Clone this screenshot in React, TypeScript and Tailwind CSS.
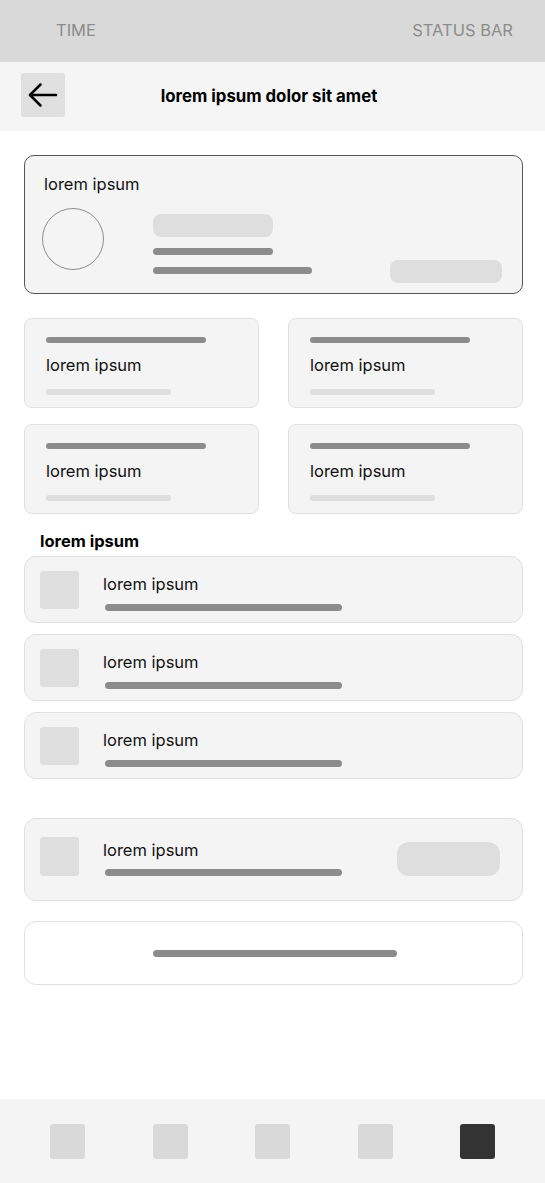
const stats = [0, 1, 2, 3];
const rows = [0, 1, 2];
const navItems = [false, false, false, false, true];

function BackArrow() {
  return (
    <svg width="30" height="26" viewBox="0 0 30 26" fill="none" stroke="#000" strokeWidth={2.5} strokeLinecap="round" strokeLinejoin="round">
      <path d="M28 13H2" />
      <path d="M12.5 2.5 2 13l10.5 10.5" />
    </svg>
  );
}

export default function App() {
  return (
    <div className="flex h-[1183px] w-[545px] flex-col bg-white font-['Inter',sans-serif] text-[16.5px] text-[#111]">
      {/* Status bar */}
      <div className="flex h-[62px] shrink-0 items-center justify-between bg-[#d9d9d9] pb-[2px] pl-[56px] pr-[32px] text-[16.5px] text-[#8c8c8c]">
        <span>TIME</span>
        <span>STATUS BAR</span>
      </div>

      {/* Header */}
      <div className="flex h-[69px] shrink-0 items-start bg-[#f5f5f5] pl-[21px] pt-[11px]">
        <button className="flex h-[44px] w-[44px] items-center justify-center rounded-[3px] bg-[#e0e0e0]">
          <BackArrow />
        </button>
        <h1 className="mt-[13px] flex-1 text-center text-[16.8px] font-bold leading-5 text-black">
          lorem ipsum dolor sit amet
        </h1>
        <div className="w-[72px]" />
      </div>

      {/* Content */}
      <div className="flex flex-col pl-6 pr-[22px] pt-6">
        {/* Main card */}
        <div className="flex h-[139px] flex-col rounded-[10px] border border-[#555] bg-[#f4f4f4] px-[17px] pt-[18px]">
          <span className="pl-[2px] leading-5">lorem ipsum</span>
          <div className="mt-[14px] flex h-[75px] items-start">
            <div className="h-[62px] w-[62px] shrink-0 rounded-full border border-[#8c8c8c]" />
            <div className="ml-[49px] mt-[6px] flex flex-col">
              <div className="h-[23px] w-[120px] rounded-lg bg-[#dedede]" />
              <div className="mt-[11px] h-[7px] w-[120px] rounded-full bg-[#8c8c8c]" />
              <div className="mt-[12px] h-[7px] w-[159px] rounded-full bg-[#8c8c8c]" />
            </div>
            <div className="ml-auto mr-[3px] h-[23px] w-[112px] self-end rounded-lg bg-[#dedede]" />
          </div>
        </div>

        {/* Stat cards */}
        <div className="mt-[24px] grid grid-cols-2 gap-x-[29px] gap-y-[16px]">
          {stats.map((i) => (
            <div
              key={i}
              className="flex h-[90px] flex-col rounded-lg border border-[#e0e0e0] bg-[#f4f4f4] pl-[21px] pt-[18px]"
            >
              <div className="h-[6px] w-[160px] rounded-full bg-[#8c8c8c]" />
              <span className="mt-[12px] leading-5">lorem ipsum</span>
              <div className="mt-[14px] h-[6px] w-[125px] rounded-full bg-[#dedede]" />
            </div>
          ))}
        </div>

        {/* Section */}
        <h2 className="mt-[17px] pl-4 font-bold leading-5 text-black">lorem ipsum</h2>
        <div className="mt-[5px] flex flex-col gap-[11px]">
          {rows.map((i) => (
            <div
              key={i}
              className="flex h-[67px] items-center rounded-xl border border-[#e0e0e0] bg-[#f4f4f4] pl-[15px]"
            >
              <div className="h-[38px] w-[39px] rounded-[3px] bg-[#dedede]" />
              <div className="ml-[24px] mt-[6px] flex flex-col">
                <span className="leading-5">lorem ipsum</span>
                <div className="ml-[2px] mt-[10px] h-[7px] w-[237px] rounded-full bg-[#8c8c8c]" />
              </div>
            </div>
          ))}
        </div>

        {/* Action card */}
        <div className="mt-[39px] flex h-[83px] items-start rounded-xl border border-[#e0e0e0] bg-[#f4f4f4] pl-[15px] pr-[22px] pt-[18px]">
          <div className="h-[39px] w-[39px] rounded-[3px] bg-[#dedede]" />
          <div className="ml-[24px] mt-[3px] flex flex-col">
            <span className="leading-5">lorem ipsum</span>
            <div className="ml-[2px] mt-[9px] h-[7px] w-[237px] rounded-full bg-[#8c8c8c]" />
          </div>
          <div className="ml-auto mt-[5px] h-[34px] w-[103px] rounded-xl bg-[#dedede]" />
        </div>

        {/* Outline button */}
        <div className="mt-[20px] flex h-[64px] items-center justify-center rounded-xl border border-[#e0e0e0] bg-white">
          <div className="ml-[3px] h-[7px] w-[244px] rounded-full bg-[#8c8c8c]" />
        </div>
      </div>

      <div className="flex-1" />

      {/* Bottom nav */}
      <div className="flex h-[84px] shrink-0 items-center justify-between bg-[#f4f4f4] px-[50px]">
        {navItems.map((active, i) => (
          <div
            key={i}
            className={`h-[35px] w-[35px] rounded-[3px] ${active ? "bg-[#333]" : "bg-[#d9d9d9]"}`}
          />
        ))}
      </div>
    </div>
  );
}
